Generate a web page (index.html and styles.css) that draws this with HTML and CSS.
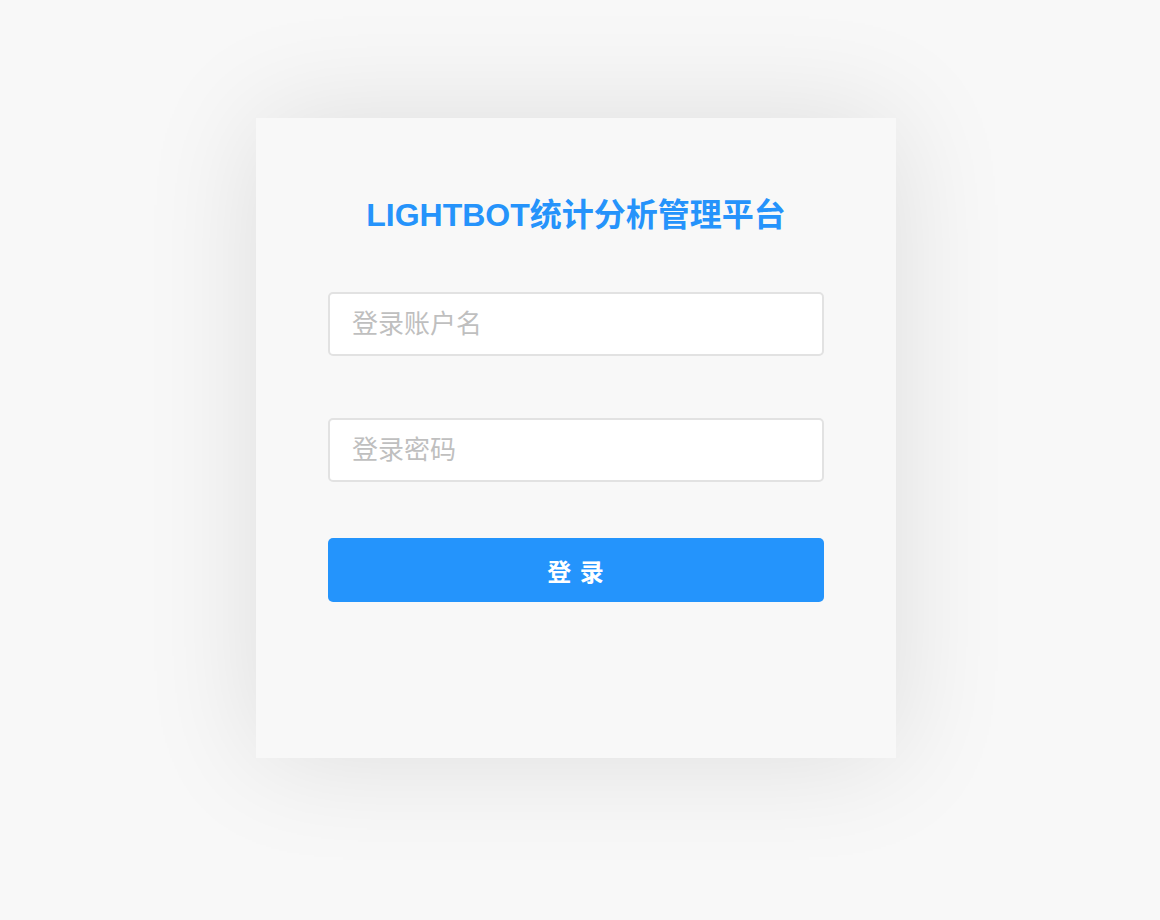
FILE: index.html
```html
<!DOCTYPE html>
<html lang="zh-CN">
<head>
<meta charset="utf-8">
<title>LIGHTBOT统计分析管理平台</title>
<link rel="stylesheet" href="styles.css">
</head>
<body>
<div class="page">
  <div class="card">
    <h1 class="title">LIGHTBOT统计分析管理平台</h1>
    <form class="form">
      <input class="field" type="text" placeholder="登录账户名">
      <input class="field field-pwd" type="password" placeholder="登录密码">
      <button class="btn" type="button">登 录</button>
    </form>
  </div>
</div>
</body>
</html>
```
FILE: styles.css
```css
html, body {
  margin: 0;
  padding: 0;
  background: #f8f8f8;
  font-family: "Liberation Sans", "Noto Sans CJK SC", sans-serif;
}
.page {
  padding: 118px 0 0 256px;
  min-height: 920px;
  box-sizing: border-box;
}
.card {
  width: 640px;
  height: 640px;
  box-sizing: border-box;
  background: #f8f8f8;
  box-shadow: 0 0 110px rgba(0, 0, 0, 0.11);
  padding: 77px 72px 0;
}
.title {
  margin: 0;
  text-align: center;
  font-size: 32px;
  line-height: 40px;
  font-weight: 700;
  color: #2593fb;
}
.form {
  display: flex;
  flex-direction: column;
  margin-top: 57px;
}
.field {
  height: 64px;
  box-sizing: border-box;
  border: 2px solid #e2e2e2;
  border-radius: 5px;
  background: #fff;
  padding: 0 22px;
  font-family: inherit;
  font-size: 26px;
  color: #333;
  outline: none;
}
.field::placeholder {
  color: #bfbfbf;
}
.field-pwd {
  margin-top: 62px;
}
.btn {
  margin-top: 56px;
  height: 64px;
  border: 0;
  border-radius: 5px;
  background: #2494fc;
  color: #fff;
  font-family: inherit;
  font-size: 24px;
  font-weight: 700;
  letter-spacing: 1px;
  cursor: pointer;
}
```
